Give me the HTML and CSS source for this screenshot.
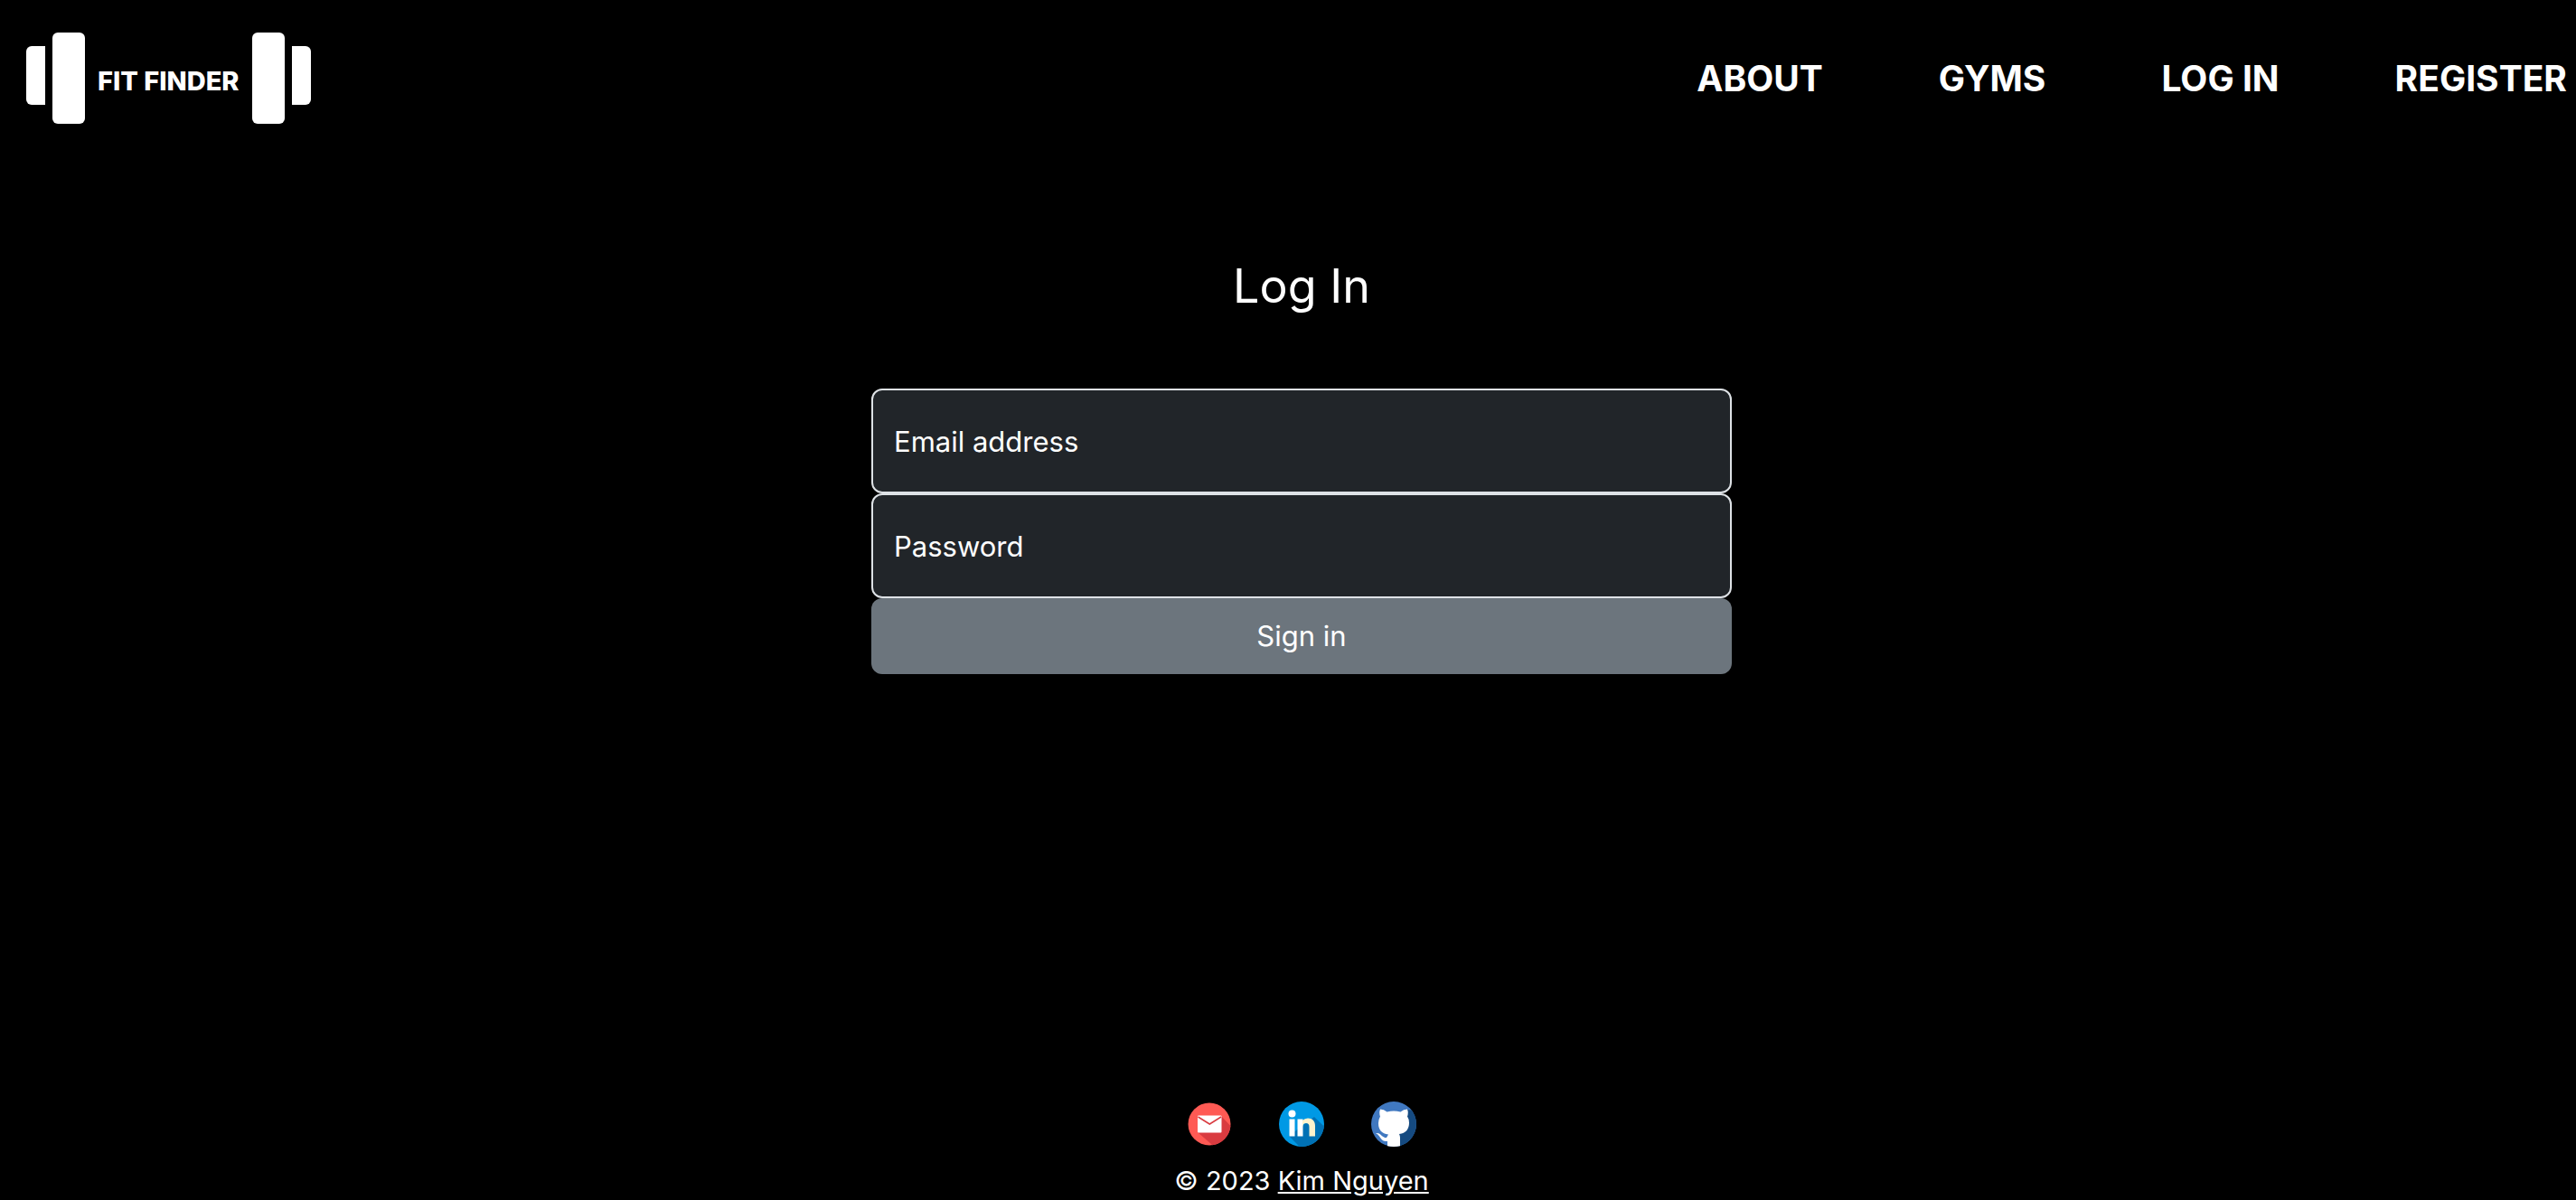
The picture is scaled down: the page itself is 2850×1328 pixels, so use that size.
FILE: index.html
```html
<!DOCTYPE html>
<html lang="en">
<head>
  <meta charset="utf-8">
  <title>Fit Finder - Log In</title>
  <link rel="stylesheet" href="styles.css">
</head>
<body>
  <header class="site-header">
    <a class="logo" href="#" aria-label="Fit Finder">
      <span class="plates" aria-hidden="true"><i class="plate plate-small-left"></i><i class="plate plate-large"></i></span>
      <span class="logo-text">FIT FINDER</span>
      <span class="plates" aria-hidden="true"><i class="plate plate-large"></i><i class="plate plate-small-right"></i></span>
    </a>
    <nav class="site-nav">
      <a href="#">ABOUT</a>
      <a href="#">GYMS</a>
      <a href="#">LOG IN</a>
      <a href="#">REGISTER</a>
    </nav>
  </header>

  <main class="login">
    <h1 class="login-title">Log In</h1>
    <form class="login-form">
      <div class="field">
        <input class="field-input" type="email" id="email">
        <label class="field-label" for="email">Email address</label>
      </div>
      <div class="field">
        <input class="field-input" type="password" id="password">
        <label class="field-label" for="password">Password</label>
      </div>
      <button class="submit" type="submit">Sign in</button>
    </form>
  </main>

  <footer class="site-footer">
    <div class="social">
      <a href="#" aria-label="Email">
        <svg viewBox="0 0 50 50">
          <circle cx="25" cy="25" r="23.5" fill="#ff5a54"/>
          <path d="M38 16L48.400 27a23.500 23.500 0 0 1-20 21.300L12 34z" fill="#d93b40"/>
          <rect x="12" y="15.500" width="26.500" height="19" rx="1" fill="#fff"/>
          <path d="M12.500 17l12.800 8L38 17" fill="none" stroke="#d93b40" stroke-width="1.500"/>
        </svg>
      </a>
      <a href="#" aria-label="LinkedIn">
        <svg viewBox="0 0 50 50">
          <circle cx="25" cy="25" r="25" fill="#0099e5"/>
          <path d="M39 17l10.800 10.500a25 25 0 0 1-27 22.400L11 38z" fill="#0071b5"/>
          <circle cx="14.500" cy="13.500" r="4" fill="#fff"/>
          <path d="M11.500 19.500h6v19h-6zM20.500 19.500h6v19h-6z" fill="#fff"/>
          <path d="M26 21q2.500-2.500 6-2.500c5 0 8 3 8 8.500v11.500h-6.500V28q0-4-3.500-4t-4 4z" fill="#fff2cc"/>
        </svg>
      </a>
      <a href="#" aria-label="GitHub">
        <svg viewBox="0 0 50 50">
          <circle cx="25" cy="25" r="25" fill="#4078c0"/>
          <path d="M39 9l5.500 .500a25 25 0 0 1-13.500 39.800V35z" fill="#154a80"/>
          <path d="M10 8.500q4 0 7.500 3 7.500-2 15 0 3.500-3 7.500-3 1.500 4 0 8 2 3 2 7 0 11-11 12.500 1 2 1 4v9.200q-7 1.500-14 0V44c-8 1-7-6-13-9 6-1 6 5 12 5q1-2 2-3.500Q8 35 8 24q0-4 2-7.500-1.500-4 0-8z" fill="#fff"/>
        </svg>
      </a>
    </div>
    <p class="copyright">© 2023 <a href="#">Kim Nguyen</a></p>
  </footer>
</body>
</html>
```
FILE: styles.css
```css
* {
  box-sizing: border-box;
}

body {
  display: flex;
  flex-direction: column;
  min-height: 100vh;
  margin: 0;
  background: #000;
  color: #fff;
  font-family: Inter, "Liberation Sans", sans-serif;
  font-size: 31px;
  line-height: 48px;
}

a {
  color: inherit;
}

.site-header {
  display: flex;
  align-items: center;
  justify-content: space-between;
  padding: 36px 10px 42px 29px;
}

.logo {
  display: flex;
  align-items: center;
  gap: 14px;
  text-decoration: none;
}

.logo-text {
  padding-top: 6px;
  font-size: 29px;
  font-weight: 800;
}

.plates {
  display: flex;
  align-items: center;
  gap: 8px;
}

.plate {
  background: #fff;
}

.plate-large {
  width: 36px;
  height: 101px;
  border-radius: 6px;
}

.plate-small-left,
.plate-small-right {
  width: 21px;
  height: 65px;
  margin-bottom: 7px;
}

.plate-small-left {
  border-radius: 6px 0 0 6px;
}

.plate-small-right {
  border-radius: 0 6px 6px 0;
}

.site-nav {
  display: flex;
  gap: 128px;
  font-size: 39px;
  font-weight: 700;
}

.site-nav a {
  text-decoration: none;
}

.login {
  flex: 1;
  display: flex;
  flex-direction: column;
  align-items: center;
  padding: 104px 0 48px 30px;
}

.login-title {
  margin: 0 0 80px;
  font-size: 52px;
  font-weight: 400;
  line-height: 67px;
}

.login-form {
  width: 34%;
  min-width: 320px;
  max-width: 952px;
}

.field {
  position: relative;
}

.field-input {
  display: block;
  width: 100%;
  height: 116px;
  padding: 32px 24px;
  border: 2px solid #dee2e6;
  border-radius: 12px;
  background: #212529;
  color: #fff;
  font: inherit;
}

.field-label {
  position: absolute;
  top: 35px;
  left: 25px;
}

.submit {
  display: block;
  width: 100%;
  padding: 18px 24px;
  border: 0;
  border-radius: 12px;
  background: #6c757d;
  color: #fff;
  font: inherit;
}

.site-footer {
  padding-left: 30px;
  text-align: center;
}

.social {
  display: flex;
  justify-content: center;
  gap: 52px;
  margin-bottom: 16px;
}

.social a,
.social svg {
  display: block;
  width: 50px;
  height: 50px;
}

.copyright {
  margin: 0;
  font-size: 29px;
  line-height: 43px;
}
```
